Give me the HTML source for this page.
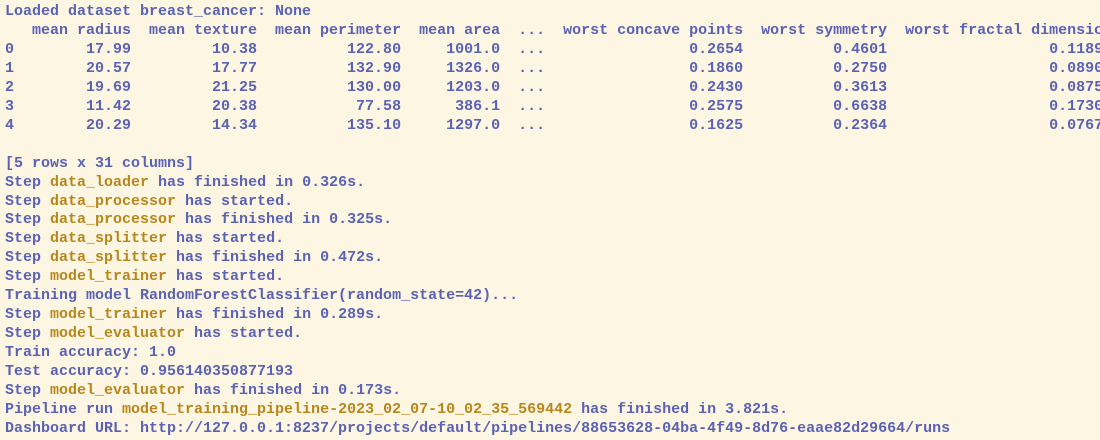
<!DOCTYPE html>
<html><head><meta charset="utf-8"><style>
html,body{margin:0;padding:0;background:#fdf6e3;width:1100px;height:440px;overflow:hidden}
pre{margin:0;padding:3px 0 0 5px;font-family:"Liberation Mono",monospace;font-size:15px;line-height:18.95px;color:#5a62b5;font-weight:bold;white-space:pre}
.o{color:#b8861b}
</style></head><body><pre>Loaded dataset breast_cancer: None
   mean radius  mean texture  mean perimeter  mean area  ...  worst concave points  worst symmetry  worst fractal dimension
0        17.99         10.38          122.80     1001.0  ...                0.2654          0.4601                  0.11890
1        20.57         17.77          132.90     1326.0  ...                0.1860          0.2750                  0.08902
2        19.69         21.25          130.00     1203.0  ...                0.2430          0.3613                  0.08758
3        11.42         20.38           77.58      386.1  ...                0.2575          0.6638                  0.17300
4        20.29         14.34          135.10     1297.0  ...                0.1625          0.2364                  0.07678

[5 rows x 31 columns]
Step <span class="o">data_loader</span> has finished in 0.326s.
Step <span class="o">data_processor</span> has started.
Step <span class="o">data_processor</span> has finished in 0.325s.
Step <span class="o">data_splitter</span> has started.
Step <span class="o">data_splitter</span> has finished in 0.472s.
Step <span class="o">model_trainer</span> has started.
Training model RandomForestClassifier(random_state=42)...
Step <span class="o">model_trainer</span> has finished in 0.289s.
Step <span class="o">model_evaluator</span> has started.
Train accuracy: 1.0
Test accuracy: 0.956140350877193
Step <span class="o">model_evaluator</span> has finished in 0.173s.
Pipeline run <span class="o">model_training_pipeline-2023_02_07-10_02_35_569442</span> has finished in 3.821s.
Dashboard URL: http://127.0.0.1:8237/projects/default/pipelines/88653628-04ba-4f49-8d76-eaae82d29664/runs</pre></body></html>
